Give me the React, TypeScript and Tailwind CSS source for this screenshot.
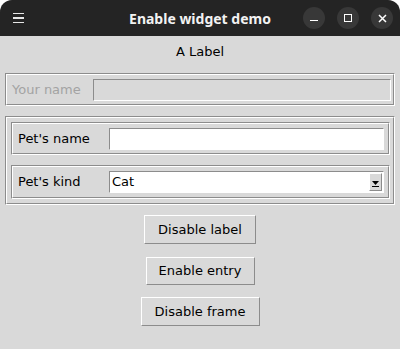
const font = "font-['DejaVu_Sans',sans-serif]";

function Groove({ className, children }: { className?: string; children: React.ReactNode }) {
  return (
    <div className={`border border-t-[#8c8c8c] border-l-[#8c8c8c] border-b-white border-r-white ${className ?? ""}`}>
      <div className="h-full border border-t-white border-l-white border-b-[#8c8c8c] border-r-[#8c8c8c]">
        {children}
      </div>
    </div>
  );
}

function Sunken({ className, children }: { className?: string; children?: React.ReactNode }) {
  return (
    <div className={`border border-t-[#8c8c8c] border-l-[#8c8c8c] border-b-white border-r-white ${className ?? ""}`}>
      {children}
    </div>
  );
}

function TkButton({ label, className }: { label: string; className: string }) {
  return (
    <button
      className={`border border-t-white border-l-white border-b-[#8c8c8c] border-r-[#8c8c8c] bg-[#d9d9d9] text-[13px] text-black ${className}`}
    >
      {label}
    </button>
  );
}

export default function App() {
  return (
    <div className={`h-[349px] w-[400px] overflow-hidden bg-white ${font}`}>
      <div className="flex h-full flex-col overflow-hidden rounded-t-[12px] bg-[#d9d9d9]">
        {/* title bar */}
        <header className="relative flex h-[36px] shrink-0 items-center bg-[#242424] pl-[13px] pr-[7px]">
          <div className="flex w-[11px] flex-col gap-[3px]">
            <span className="h-[1.5px] bg-[#e6e6e6]" />
            <span className="h-[1.5px] bg-[#e6e6e6]" />
            <span className="h-[1.5px] bg-[#e6e6e6]" />
          </div>
          <h1 className="absolute inset-x-0 text-center font-['Noto_Sans',sans-serif] text-[14px] font-bold text-[#f2f2f2]">
            Enable widget demo
          </h1>
          <div className="ml-auto flex gap-[12px]">
            <div className="flex h-[22px] w-[22px] items-center justify-center rounded-full bg-[#383838]">
              <span className="mt-[5px] h-[1.5px] w-[8px] bg-white" />
            </div>
            <div className="flex h-[22px] w-[22px] items-center justify-center rounded-full bg-[#383838]">
              <span className="h-[8px] w-[8px] border-[1.5px] border-white" />
            </div>
            <div className="flex h-[22px] w-[22px] items-center justify-center rounded-full bg-[#383838]">
              <svg width="9" height="9" viewBox="0 0 9 9">
                <path d="M1 1L8 8M8 1L1 8" stroke="white" strokeWidth="1.5" />
              </svg>
            </div>
          </div>
        </header>

        {/* body */}
        <div className="flex flex-col text-[13px] text-black">
          <div className="mt-[7px] h-[18px] text-center leading-[18px]">A Label</div>

          <Groove className="ml-[5px] mt-[12px] h-[33px] w-[390px]">
            <div className="flex h-full items-center pl-[5px] pr-[2px]">
              <span className="w-[81px] text-[#a3a3a3]">Your name</span>
              <Sunken className="h-[22px] flex-1 bg-[#d9d9d9]" />
            </div>
          </Groove>

          <Groove className="ml-[5px] mt-[10px] w-[390px]">
            <div className="flex flex-col gap-[10px] py-[4px] pl-[4px] pr-[3px]">
              <Groove className="h-[33px]">
                <div className="flex h-full items-center pl-[5px] pr-[4px]">
                  <span className="w-[91px]">Pet's name</span>
                  <Sunken className="h-[22px] flex-1 bg-white" />
                </div>
              </Groove>
              <Groove className="h-[34px]">
                <div className="flex h-full items-center pl-[5px] pr-[4px]">
                  <span className="w-[91px]">Pet's kind</span>
                  <Sunken className="flex h-[22px] flex-1 items-center bg-white pl-[2px] pr-[1px]">
                    <span className="flex-1">Cat</span>
                    <div className="flex h-[18px] w-[13px] items-center justify-center border border-t-white border-l-white border-b-[#8c8c8c] border-r-[#8c8c8c] bg-[#d9d9d9]">
                      <svg width="7" height="6" viewBox="0 0 7 6" className="mt-[3px]">
                        <path d="M0 0H7L3.5 4Z" fill="black" />
                        <rect x="0" y="5" width="7" height="1" fill="black" />
                      </svg>
                    </div>
                  </Sunken>
                </div>
              </Groove>
            </div>
          </Groove>

          <div className="mt-[10px] flex flex-col items-center">
            <TkButton label="Disable label" className="h-[29px] w-[112px]" />
            <TkButton label="Enable entry" className="mt-[13px] h-[28px] w-[109px]" />
            <TkButton label="Disable frame" className="mt-[12px] h-[29px] w-[119px]" />
          </div>
        </div>
      </div>
    </div>
  );
}
